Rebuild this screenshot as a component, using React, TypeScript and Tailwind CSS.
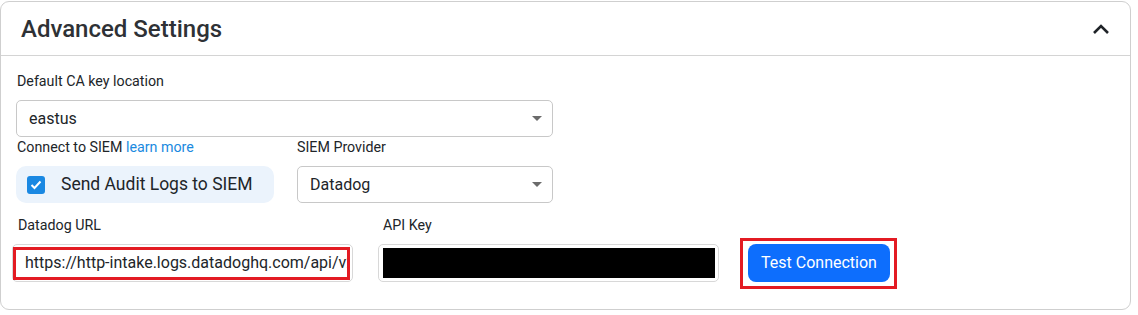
import React from 'react';

function Caret() {
  return (
    <svg width="10" height="5" viewBox="0 0 10 5" className="shrink-0">
      <path d="M0 0 L10 0 L5 5 Z" fill="#6b6b6b" />
    </svg>
  );
}

export default function App() {
  return (
    <div className="w-[1138px] h-[315px] bg-white pt-px font-['Roboto',sans-serif] text-[#212529]">
      <div className="w-[1131px] h-[309px] border border-[#cfcfcf] rounded-[9px] flex flex-col">
        {/* Header */}
        <div className="h-[54px] shrink-0 border-b border-[#d4d4d4] flex items-center justify-between pl-5 pr-5">
          <h2 className="text-[24px] font-medium text-[#2e3135] leading-none">Advanced Settings</h2>
          <svg width="18" height="12" viewBox="0 0 18 12">
            <polyline points="2,10 9,3 16,10" fill="none" stroke="#1f2328" strokeWidth="2.6" />
          </svg>
        </div>

        {/* Body */}
        <div className="flex flex-col pl-[15px] pt-[16px]">
          <label className="text-[14.25px] leading-[18px] pl-px">Default CA key location</label>
          <div className="mt-[10px] w-[537px] h-[37px] border border-[#c8c8c8] rounded-[5px] flex items-center justify-between pl-3 pr-[10px]">
            <span className="text-[16px]">eastus</span>
            <Caret />
          </div>

          <div className="flex mt-[1px]">
            <div className="w-[281px] flex flex-col">
              <div className="text-[14.25px] leading-[18px] pl-px">
                Connect to SIEM <span className="text-[#1a8ae0]">learn more</span>
              </div>
              <div className="mt-[10px] w-[258px] h-[37px] bg-[#ebf3fc] rounded-[10px] flex items-center pl-[11px] gap-4">
                <div className="w-[18px] h-[18px] rounded-[3px] bg-[#1a88e2] flex items-center justify-center">
                  <svg width="12" height="10" viewBox="0 0 12 10">
                    <polyline points="1.5,5 4.5,8 10.5,1.5" fill="none" stroke="white" strokeWidth="2" />
                  </svg>
                </div>
                <span className="text-[17.5px]">Send Audit Logs to SIEM</span>
              </div>
            </div>
            <div className="flex flex-col">
              <div className="text-[14.25px] leading-[18px]">SIEM Provider</div>
              <div className="mt-[10px] w-[256px] h-[37px] border border-[#c8c8c8] rounded-[5px] flex items-center justify-between pl-3 pr-[10px]">
                <span className="text-[16px]">Datadog</span>
                <Caret />
              </div>
            </div>
          </div>

          <div className="flex items-start mt-[13px]">
            <div className="flex flex-col -ml-1 w-[366px]">
              <div className="text-[14.25px] leading-[18px] pl-[6px]">Datadog URL</div>
              <div className="relative mt-[10px] w-[341px] h-[38px] border border-[#d8d8d8] rounded-[5px] flex items-center pl-3">
                <div className="w-[322px] overflow-hidden">
                  <span className="text-[16px] whitespace-nowrap">https://http-intake.logs.datadoghq.com/api/v2/logs</span>
                </div>
                <div className="absolute left-0 top-[2px] w-[337px] h-[33px] border-[3px] border-[#e31b23] pointer-events-none" />
              </div>
            </div>
            <div className="flex flex-col w-[362px]">
              <div className="text-[14.25px] leading-[18px] pl-[5px]">API Key</div>
              <div className="mt-[10px] w-[341px] h-[38px] border border-[#d8d8d8] rounded-[5px] flex items-center pl-1 pr-[3px]">
                <div className="w-full h-[30px] bg-black" />
              </div>
            </div>
            <div className="mt-[22px] border-[3px] border-[#e31b23] pt-[3px] pb-[4px] pl-[5px] pr-[4px]">
              <button className="w-[142px] h-[38px] rounded-[8px] bg-[#0d6efd] text-white text-[16px]">
                Test Connection
              </button>
            </div>
          </div>
        </div>
      </div>
    </div>
  );
}
